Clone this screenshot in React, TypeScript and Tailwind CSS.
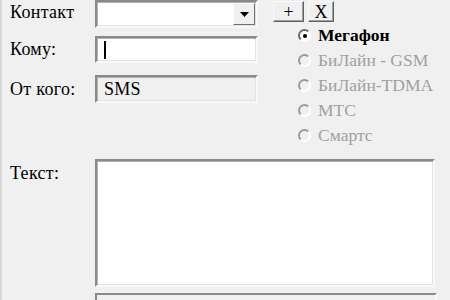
const sunken =
  "border-2 border-t-[#8a8a8a] border-l-[#8a8a8a] border-b-[#f8f8f8] border-r-[#f8f8f8] shadow-[inset_1px_1px_0_#b0b0b0,inset_-1px_-1px_0_#e3e3e3]";

function Label({ children, className = "" }: { children: React.ReactNode; className?: string }) {
  return (
    <div
      className={`w-[93px] pl-[8px] font-['Liberation_Serif',serif] text-[18px] leading-none tracking-[0.3px] text-black ${className}`}
    >
      {children}
    </div>
  );
}

function Radio({ label, checked = false, disabled = false }: { label: string; checked?: boolean; disabled?: boolean }) {
  return (
    <div className="flex h-[25px] items-center">
      <span
        className={`relative flex h-[13px] w-[13px] items-center justify-center rounded-full border-2 ${
          disabled
            ? "border-t-[#9a9a9a] border-l-[#9a9a9a] border-b-[#ffffff] border-r-[#ffffff] bg-[#f0f0f0]"
            : "border-t-[#6a6a6a] border-l-[#6a6a6a] border-b-[#ffffff] border-r-[#ffffff] bg-white"
        }`}
      >
        {checked && <span className="h-[4px] w-[4px] rounded-full bg-black" />}
      </span>
      <span
        className={`ml-[7px] font-['Liberation_Serif',serif] text-[17.5px] leading-none ${
          checked ? "font-bold text-black" : ""
        } ${disabled ? "text-[#a0a0a0]" : ""}`}
      >
        {label}
      </span>
    </div>
  );
}

export default function App() {
  return (
    <div className="relative h-[300px] w-[450px] overflow-hidden border-l-2 border-l-[#d8d8d8] bg-[#f0f0f0] font-['Liberation_Serif',serif]">
      <div className="flex">
        {/* left: labels and fields */}
        <div className="flex w-[262px] flex-col">
          <div className="flex h-[28px] items-center">
            <Label className="-mt-[5px]">Контакт</Label>
            <div className={`flex h-[28px] w-[163px] items-stretch bg-white ${sunken}`}>
              <div className="flex-1" />
              <div className="my-[1px] mr-[1px] flex w-[22px] items-center justify-center border border-t-[#fafafa] border-l-[#fafafa] border-b-[#707070] border-r-[#707070] bg-[#f0f0f0]">
                <svg width="9" height="5" viewBox="0 0 9 5">
                  <path d="M0 0h9L4.5 5z" fill="#000" />
                </svg>
              </div>
            </div>
          </div>
          <div className="mt-[8px] flex h-[27px] items-center">
            <Label className="mt-[-2px]">Кому:</Label>
            <div className={`flex h-[27px] w-[163px] items-center bg-white pl-[7px] ${sunken}`}>
              <span className="h-[18px] w-[2px] bg-black" />
            </div>
          </div>
          <div className="mt-[12px] flex h-[28px] items-center">
            <Label className="mt-0">От кого:</Label>
            <div
              className={`flex h-[28px] w-[163px] items-center bg-[#f0f0f0] pl-[7px] text-[18px] tracking-[0.3px] text-black ${sunken}`}
            >
              SMS
            </div>
          </div>
        </div>

        {/* right: buttons and operators */}
        <div className="flex flex-col pl-[9px]">
          <div className="mt-[1px] flex gap-[4px]">
            <button className="flex h-[21px] w-[31px] items-center justify-center border border-t-[#fafafa] border-l-[#fafafa] border-b-[#606060] border-r-[#606060] bg-[#f0f0f0] font-['Liberation_Serif',serif] text-[18px] leading-none shadow-[inset_-1px_-1px_0_#a0a0a0]">
              +
            </button>
            <button className="flex h-[21px] w-[26px] items-center justify-center border border-t-[#fafafa] border-l-[#fafafa] border-b-[#606060] border-r-[#606060] bg-[#f0f0f0] font-['Liberation_Serif',serif] text-[18px] leading-none shadow-[inset_-1px_-1px_0_#a0a0a0]">
              X
            </button>
          </div>
          <div className="mt-[1px] flex flex-col pl-[25px]">
            <Radio label="Мегафон" checked />
            <Radio label="БиЛайн - GSM" disabled />
            <Radio label="БиЛайн-TDMA" disabled />
            <Radio label="МТС" disabled />
            <Radio label="Смартс" disabled />
          </div>
        </div>
      </div>

      <div className="mt-[11px] flex">
        <Label className="w-[91px] pt-[5px]">Текст:</Label>
        <div className={`h-[128px] w-[340px] bg-white ${sunken}`} />
      </div>
      <div className="mt-[6px] ml-[93px] h-[20px] w-[342px] border-2 border-b-0 border-t-[#8a8a8a] border-l-[#8a8a8a] border-r-[#f8f8f8] bg-[#f0f0f0]" />
    </div>
  );
}
